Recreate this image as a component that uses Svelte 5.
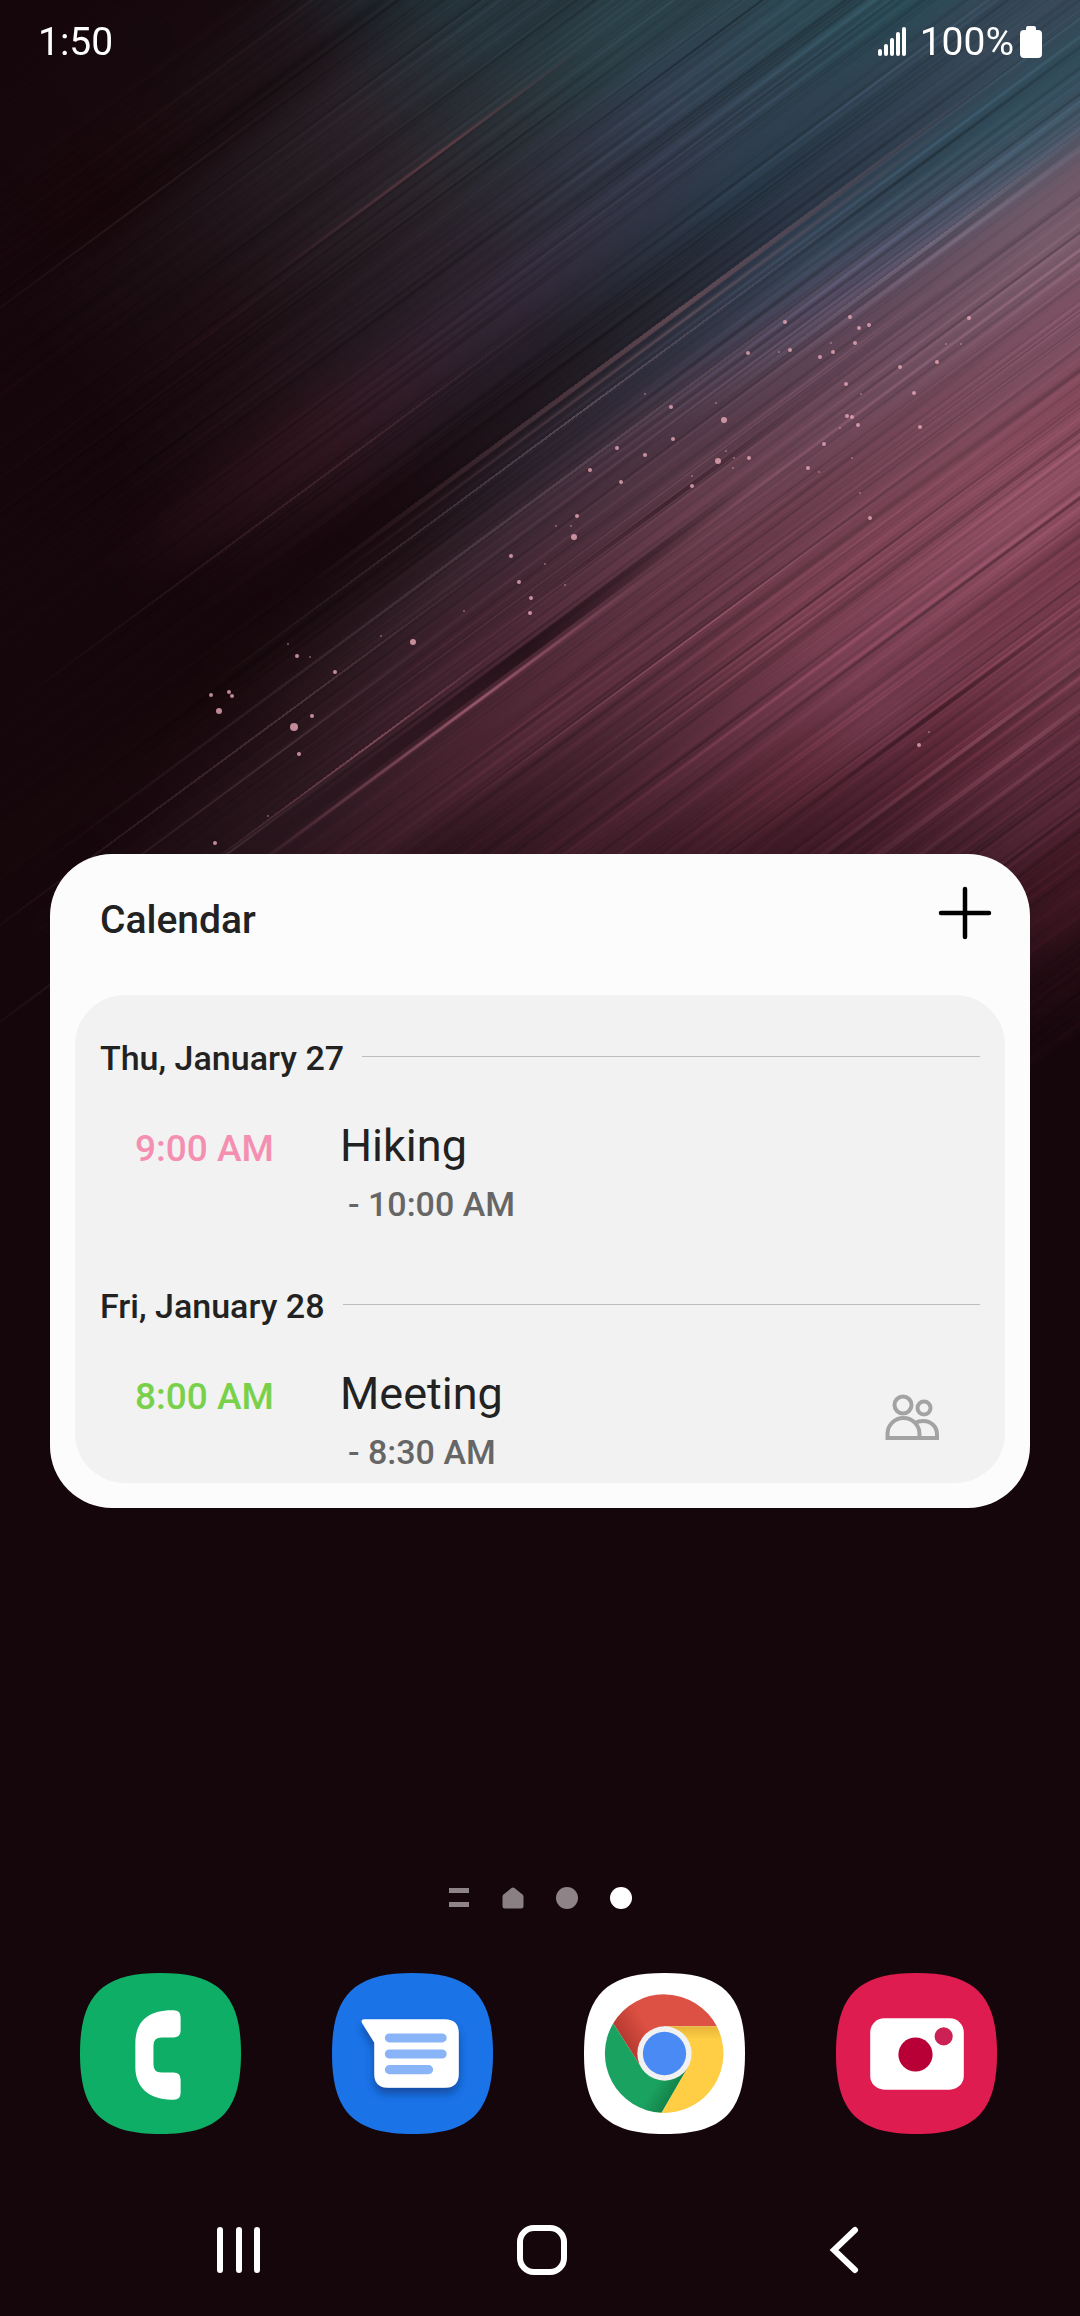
<script>
  const days = [
    {
      date: "Thu, January 27",
      start: "9:00 AM",
      title: "Hiking",
      end: "- 10:00 AM",
      color: "pink",
      shared: false,
    },
    {
      date: "Fri, January 28",
      start: "8:00 AM",
      title: "Meeting",
      end: "- 8:30 AM",
      color: "green",
      shared: true,
    },
  ];

  // Wallpaper colours: position across the streaks, then [position along, colour]
  const bands = [
    [100, [[-100, "#15060b"], [250, "#170a0f"]]],
    [200, [[-100, "#15060b"], [0, "#160609"], [250, "#1d1318"], [400, "#203037"]]],
    [300, [[-150, "#15060b"], [0, "#1b0e13"], [250, "#282127"], [400, "#25333b"]]],
    [400, [[-150, "#15060b"], [0, "#1c0d12"], [250, "#2a242a"], [500, "#2a4048"]]],
    [480, [[-180, "#15060b"], [0, "#1f1016"], [250, "#29222b"], [500, "#323f50"], [650, "#2d4852"]]],
    [550, [[-250, "#15060b"], [0, "#32161f"], [250, "#33293a"], [500, "#323d4e"], [750, "#2a4b56"]]],
    [600, [[-200, "#15060b"], [0, "#26121a"], [250, "#251f2a"], [500, "#293a49"], [800, "#354858"]]],
    [650, [[-50, "#15060b"], [50, "#180a0f"], [250, "#201a20"], [500, "#2a3343"], [800, "#374757"]]],
    [700, [[-250, "#16070b"], [0, "#1f1116"], [250, "#2f2a38"], [500, "#354456"], [750, "#304c5a"]]],
    [750, [[-450, "#15060b"], [-250, "#1e0d12"], [0, "#35222b"], [250, "#473240"], [500, "#4c4459"], [750, "#3c4f5f"]]],
    [800, [[-550, "#15060b"], [-250, "#26141a"], [0, "#40232f"], [250, "#563846"], [500, "#64485a"], [700, "#705a6a"]]],
    [850, [[-550, "#15060b"], [-250, "#2c1820"], [0, "#4c2735"], [250, "#673d4c"], [500, "#6c4b5c"], [700, "#785a69"]]],
    [920, [[-500, "#15060b"], [-250, "#351923"], [0, "#552a38"], [250, "#6b3b4b"], [500, "#774859"], [640, "#7c5062"]]],
    [1000, [[-450, "#15060b"], [-200, "#260f17"], [0, "#44222e"], [250, "#743c4d"], [500, "#84495b"]]],
    [1060, [[-350, "#15060b"], [0, "#4a2230"], [250, "#783e51"], [500, "#8c4d61"]]],
    [1130, [[-250, "#15060b"], [0, "#3a1924"], [150, "#5b2837"], [250, "#6e384a"], [500, "#763a4c"]]],
    [1200, [[-150, "#15060b"], [150, "#431c29"], [300, "#5c2838"], [430, "#6e3848"]]],
    [1300, [[0, "#15060b"], [300, "#542636"], [400, "#5e2c3c"]]],
    [1400, [[100, "#15060b"], [250, "#3a1520"], [350, "#441a26"]]],
    [1480, [[100, "#15060b"], [250, "#220b12"]]],
    [1540, [[100, "#15060b"], [250, "#15060b"]]],
  ];

  const from = -800;
  const span = 1800;
  const slant = "rotate(-3 800 450) scale(1 0.926) rotate(-35.5)";

  const bandRects = bands.map(([at, stops], i) => {
    const prev = i ? bands[i - 1][0] : at - 60;
    const next = i < bands.length - 1 ? bands[i + 1][0] : at + 200;
    const top = (prev + at) / 2;
    return {
      id: `band${i}`,
      y: top,
      height: (at + next) / 2 - top + 1,
      stops: stops.map(([pos, color]) => ({ offset: (pos - from) / span, color })),
    };
  });

  // Same streaks on every load
  let seed = 27;
  function random() {
    seed = (seed * 16807) % 2147483647;
    return seed / 2147483647;
  }

  const streaks = Array.from({ length: 1300 }, () => {
    const y = 130 + random() * 1400;
    const width = 350 + random() * 900;
    return {
      x: -600 + random() * 1000,
      y,
      width,
      height: 0.8 + random() * random() * 3.5,
      dark: random() < 0.55,
      opacity: 0.06 + random() * 0.2,
    };
  });

  // x, y, width, height, colour, opacity in streak coordinates
  const lines = [
    [-120, 664, 900, 5, "#9c6870", 0.45],
    [-100, 676, 860, 3, "#9a7078", 0.4],
    [-260, 690, 900, 2, "#a58a98", 0.35],
    [60, 381, 420, 3, "#8a4a54", 0.5],
    [-420, 583, 800, 2, "#7a4c56", 0.3],
    [-250, 238, 500, 2, "#6a4650", 0.25],
    [-520, 735, 1300, 3, "#8c7280", 0.3],
    [300, 766, 560, 4, "#a08ea4", 0.4],
    [360, 778, 500, 3, "#b09cb0", 0.3],
    [-330, 853, 640, 13, "#12060b", 0.65],
    [-120, 820, 640, 4, "#12060b", 0.5],
    [-360, 870, 560, 3, "#d07a90", 0.6],
    [-380, 840, 400, 2, "#c07588", 0.5],
    [-620, 761, 760, 2, "#7a5c66", 0.4],
    [-580, 790, 640, 2, "#7a5c66", 0.35],
    [-680, 843, 520, 2, "#7a5c66", 0.4],
    [-150, 950, 620, 2, "#c8788c", 0.45],
    [-100, 1010, 600, 2, "#c8788c", 0.3],
    [20, 1165, 500, 5, "#2a0d16", 0.5],
    [60, 1215, 480, 4, "#b46a7e", 0.4],
    [80, 1250, 480, 5, "#b46a7e", 0.35],
    [80, 1276, 480, 4, "#a86276", 0.35],
  ];

  // x, y, radius
  const sparks = [
    [211, 695, 2], [229, 692, 2], [232, 696, 2], [219, 711, 3], [294, 727, 4], [312, 716, 2],
    [288, 644, 1], [297, 656, 2], [310, 657, 1], [335, 672, 2], [381, 636, 1], [413, 642, 3],
    [299, 754, 2], [268, 816, 1], [215, 843, 2], [464, 611, 1], [519, 582, 2], [531, 598, 2],
    [530, 613, 2], [511, 556, 2], [545, 564, 1], [565, 585, 1], [574, 537, 3], [577, 516, 2],
    [571, 526, 1], [556, 526, 1], [590, 470, 2], [617, 448, 2], [621, 482, 2], [645, 455, 2],
    [673, 439, 2], [645, 394, 1], [671, 407, 2], [716, 403, 1], [724, 420, 3], [718, 461, 3],
    [726, 451, 1], [734, 458, 1], [749, 458, 2], [733, 468, 1], [692, 486, 2], [692, 476, 1],
    [748, 353, 2], [790, 350, 2], [779, 352, 1], [785, 322, 2], [820, 357, 2], [833, 352, 2],
    [831, 343, 1], [850, 317, 2], [859, 328, 2], [869, 325, 2], [855, 343, 2], [846, 384, 2],
    [861, 394, 1], [847, 416, 2], [852, 417, 2], [858, 425, 2], [840, 428, 1], [824, 444, 2],
    [808, 468, 2], [819, 472, 1], [852, 458, 1], [870, 518, 2], [860, 493, 1], [900, 367, 2],
    [914, 393, 2], [920, 427, 2], [937, 362, 2], [946, 344, 1], [961, 344, 1], [969, 318, 2],
    [919, 745, 2], [929, 732, 1],
  ];
</script>

{#snippet squircle(color)}
  <path
    d="M80 0C138 0 160 22 160 80S138 160 80 160 0 138 0 80 22 0 80 0Z"
    fill={color}
  />
{/snippet}

<div class="phone">
  <svg class="wallpaper" viewBox="0 0 1080 1300" aria-hidden="true">
    <defs>
      <filter
        id="smooth"
        filterUnits="userSpaceOnUse"
        x="-900"
        y="-100"
        width="2000"
        height="1900"
        color-interpolation-filters="sRGB"
      >
        <feGaussianBlur stdDeviation="16" />
      </filter>
      <linearGradient id="light">
        <stop offset="0" stop-color="#fff" stop-opacity="0" />
        <stop offset="0.5" stop-color="#fff" />
        <stop offset="1" stop-color="#fff" stop-opacity="0" />
      </linearGradient>
      <linearGradient id="dark">
        <stop offset="0" stop-color="#000" stop-opacity="0" />
        <stop offset="0.5" stop-color="#000" />
        <stop offset="1" stop-color="#000" stop-opacity="0" />
      </linearGradient>
      {#each bandRects as band}
        <linearGradient id={band.id}>
          {#each band.stops as stop}
            <stop offset={stop.offset} stop-color={stop.color} />
          {/each}
        </linearGradient>
      {/each}
      {#each lines as line, i}
        <linearGradient id="line{i}">
          <stop offset="0" stop-color={line[4]} stop-opacity="0" />
          <stop offset="0.55" stop-color={line[4]} />
          <stop offset="1" stop-color={line[4]} stop-opacity="0" />
        </linearGradient>
      {/each}
    </defs>
    <g transform={slant}>
      <g filter="url(#smooth)">
        {#each bandRects as band}
          <rect x={from} y={band.y} width={span} height={band.height} fill="url(#{band.id})" />
        {/each}
      </g>
    </g>
    <g class="streaks" transform={slant}>
      {#each streaks as s}
        <rect
          x={s.x}
          y={s.y}
          width={s.width}
          height={s.height}
          fill={s.dark ? "url(#dark)" : "url(#light)"}
          opacity={s.opacity}
        />
      {/each}
    </g>
    <g transform={slant}>
      {#each lines as [x, y, width, height, , opacity], i}
        <rect {x} {y} {width} {height} fill="url(#line{i})" {opacity} />
      {/each}
    </g>
    {#each sparks as [cx, cy, r]}
      <circle {cx} {cy} {r} fill="#e8a9b6" opacity={r > 1 ? 0.8 : 0.5} />
    {/each}
  </svg>

  <header class="status-bar">
    <span>1:50</span>
    <div class="status-right">
      <svg width="30" height="32" viewBox="0 0 30 32" aria-label="Signal">
        <g stroke="#fff" stroke-width="4" stroke-linecap="round">
          <path d="M3 25v3M9 20v8M15 14v14M21 8v20M27 3v25" />
        </g>
      </svg>
      <span class="percent">100%</span>
      <svg width="22" height="34" viewBox="0 0 22 34" aria-label="Battery">
        <path
          d="M8 1h6q2 0 2 2v2h2q4 0 4 4v20q0 4-4 4H4q-4 0-4-4V9q0-4 4-4h2V3q0-2 2-2Z"
          fill="#fff"
        />
      </svg>
    </div>
  </header>

  <main class="widget">
    <div class="widget-header">
      <h2>Calendar</h2>
      <button class="add" aria-label="Add event">
        <svg width="60" height="60" viewBox="0 0 60 60">
          <path d="M30 6v48M6 30h48" stroke="#000" stroke-width="4.5" stroke-linecap="round" />
        </svg>
      </button>
    </div>
    <div class="agenda">
      {#each days as day}
        <section>
          <div class="day">
            <h3>{day.date}</h3>
            <div class="rule"></div>
          </div>
          <div class="event">
            <div class="event-text">
              <span class="time {day.color}">{day.start}</span>
              <div>
                <div class="title">{day.title}</div>
                <div class="end">{day.end}</div>
              </div>
            </div>
            {#if day.shared}
              <svg width="54" height="50" viewBox="0 0 54 50" aria-label="Shared">
                <g fill="none" stroke="#a3a3a3" stroke-width="4">
                  <circle cx="18" cy="11" r="8.5" />
                  <circle cx="39" cy="14" r="6.5" />
                  <path d="M2.5 44v-4a16 16 0 0 1 32 0V44Z" />
                  <path d="M30 29q3.500-2 8-2c8 0 14 5.500 14 13.500V44H34" />
                </g>
              </svg>
            {/if}
          </div>
        </section>
      {/each}
    </div>
  </main>

  <div class="pages">
    <svg width="22" height="22" viewBox="0 0 22 22">
      <path d="M1 1h20v5H1zM1 15h20v5H1z" fill="#8e8387" />
    </svg>
    <svg width="22" height="22" viewBox="0 0 22 22">
      <path
        d="M9.500 1q1.500-1 3 0l8 6.500q1 1 1 2V19q0 2.500-2.500 2.500H3Q.5 21.500.5 19V9.500q0-1 1-2Z"
        fill="#8a7f83"
      />
    </svg>
    <span class="dot"></span>
    <span class="dot active"></span>
  </div>

  <div class="dock">
    <button aria-label="Phone">
      <svg viewBox="0 0 160 160">
        {@render squircle("#0fae66")}
        <path
          d="M91 37h2q7 0 7 7v13q0 7-7 7H81q-8 0-8 8v19q0 8 8 8h12q7 0 7 7v13q0 7-7 7h-2C68 126 55 113 55 94V70C55 49 67 37 91 37Z"
          fill="#fff"
        />
      </svg>
    </button>
    <button aria-label="Messages">
      <svg viewBox="0 0 160 160">
        <defs>
          <filter id="shade" x="-20%" y="-20%" width="140%" height="160%">
            <feDropShadow dx="0" dy="6" stdDeviation="4" flood-color="#0b3a86" flood-opacity="0.7" />
          </filter>
        </defs>
        {@render squircle("#1b73e8")}
        <path
          d="M32 46h80q14 0 14 14v40q0 14-14 14H56q-14 0-14-14V69L30 50q-2-4 2-4Z"
          fill="#fff"
          filter="url(#shade)"
        />
        <path
          d="M57 64.500h52.500M57 80.500h52.500M57 96h39"
          stroke="#8ab4f8"
          stroke-width="9"
          stroke-linecap="round"
        />
      </svg>
    </button>
    <button aria-label="Chrome">
      <svg viewBox="0 0 160 160">
        <defs>
          <linearGradient id="redShade" gradientUnits="userSpaceOnUse" x1="43" y1="72" x2="66" y2="58">
            <stop offset="0" stop-color="#b83a30" />
            <stop offset="1" stop-color="#dd5144" />
          </linearGradient>
          <linearGradient id="yellowShade" gradientUnits="userSpaceOnUse" x1="100" y1="53" x2="100" y2="66">
            <stop offset="0" stop-color="#e5b43a" />
            <stop offset="1" stop-color="#ffce44" />
          </linearGradient>
          <linearGradient id="greenShade" gradientUnits="userSpaceOnUse" x1="92" y1="117" x2="74" y2="106">
            <stop offset="0" stop-color="#148048" />
            <stop offset="1" stop-color="#1aa260" />
          </linearGradient>
        </defs>
        {@render squircle("#fff")}
        <path d="M29 50A59 59 0 0 1 132 53H80L57 94Z" fill="url(#redShade)" />
        <path d="M80 53h52a59 59 0 0 1-55 86l26-45Z" fill="url(#yellowShade)" />
        <path d="M77 139A59 59 0 0 1 29 50l28 44 46 0Z" fill="url(#greenShade)" />
        <circle cx="80" cy="80" r="27" fill="#f1f1f1" />
        <circle cx="80" cy="80" r="21.500" fill="#4a8af4" />
      </svg>
    </button>
    <button aria-label="Camera">
      <svg viewBox="0 0 160 160">
        {@render squircle("#df1c50")}
        <rect x="34" y="45" width="93" height="71" rx="14" fill="#fff" />
        <circle cx="79" cy="81" r="17" fill="#b80036" />
        <circle cx="107" cy="63" r="9" fill="#cb2154" />
      </svg>
    </button>
  </div>

  <nav class="nav-bar">
    <button aria-label="Recents">
      <svg width="52" height="52" viewBox="0 0 52 52">
        <path d="M7 6v40M26 6v40M44 6v40" stroke="#fff" stroke-width="6" stroke-linecap="round" />
      </svg>
    </button>
    <button aria-label="Home">
      <svg width="52" height="52" viewBox="0 0 52 52">
        <rect x="4" y="4" width="44" height="44" rx="14" fill="none" stroke="#fff" stroke-width="6" />
      </svg>
    </button>
    <button aria-label="Back">
      <svg width="52" height="52" viewBox="0 0 52 52">
        <path
          d="M37 6 16 26l21 20"
          fill="none"
          stroke="#fff"
          stroke-width="6"
          stroke-linecap="round"
        />
      </svg>
    </button>
  </nav>
</div>

<style>
  :global(body) {
    margin: 0;
    background: #15060b;
  }

  .phone {
    position: relative;
    display: flex;
    flex-direction: column;
    box-sizing: border-box;
    min-height: 100vh;
    padding-bottom: 36px;
    overflow: hidden;
    background: #15060b;
    color: #222;
    font-family: Roboto, "Noto Sans", sans-serif;
  }

  .wallpaper {
    position: absolute;
    top: 0;
    left: 0;
    width: 100%;
  }

  .streaks {
    mix-blend-mode: overlay;
  }

  /* keeps the content above the wallpaper */
  .status-bar,
  .widget,
  .pages,
  .dock,
  .nav-bar {
    position: relative;
  }

  button {
    display: flex;
    padding: 0;
    border: none;
    background: none;
    cursor: pointer;
  }

  h2,
  h3 {
    margin: 0;
    font-weight: 500;
  }

  .status-bar {
    display: flex;
    justify-content: space-between;
    align-items: center;
    height: 84px;
    padding: 0 38px;
    color: #fff;
    font-size: 39px;
  }

  .status-right {
    display: flex;
    align-items: center;
  }

  .percent {
    margin: 0 6px 0 13px;
  }

  .widget {
    margin: auto 50px 0;
    padding: 0 25px 25px;
    border-radius: 62px;
    background: #fcfcfc;
  }

  .widget-header {
    display: flex;
    justify-content: space-between;
    align-items: flex-start;
    height: 112px;
    padding: 29px 10px 0 25px;
  }

  .widget-header h2 {
    margin-top: 13px;
    font-size: 39px;
    line-height: 48px;
  }

  .agenda {
    display: flex;
    flex-direction: column;
    gap: 62px;
    padding: 43px 25px 11px;
    border-radius: 50px;
    background: #f2f2f2;
  }

  .day {
    display: flex;
    align-items: center;
    gap: 18px;
    margin-bottom: 40px;
  }

  .day h3 {
    font-size: 34px;
    line-height: 40px;
  }

  .rule {
    flex: 1;
    height: 1px;
    margin-bottom: 4px;
    background: #bdbdbd;
  }

  .event {
    display: flex;
    justify-content: space-between;
    align-items: center;
    padding: 0 41px 0 35px;
  }

  .event-text {
    display: grid;
    grid-template-columns: 205px auto;
    align-items: baseline;
  }

  .time {
    font-size: 37px;
    font-weight: 500;
  }

  .pink {
    color: #f48fb1;
  }

  .green {
    color: #79d14b;
  }

  .title {
    font-size: 45px;
    line-height: 56px;
  }

  .end {
    margin-top: 10px;
    padding-left: 8px;
    color: #666;
    font-size: 34px;
    font-weight: 500;
    line-height: 40px;
  }

  .pages {
    display: flex;
    justify-content: center;
    gap: 32px;
    margin-top: 379px;
  }

  .dot {
    width: 22px;
    height: 22px;
    border-radius: 50%;
    background: #8e8387;
  }

  .dot.active {
    background: #fff;
  }

  .dock {
    display: flex;
    justify-content: space-between;
    margin-top: 64px;
    padding: 0 83px 0 80px;
  }

  .dock svg {
    width: 161px;
    height: 161px;
  }

  .nav-bar {
    display: flex;
    justify-content: space-between;
    margin-top: 86px;
    padding: 0 210px 0 213px;
  }

  .nav-bar button {
    padding: 4px 0;
  }
</style>
